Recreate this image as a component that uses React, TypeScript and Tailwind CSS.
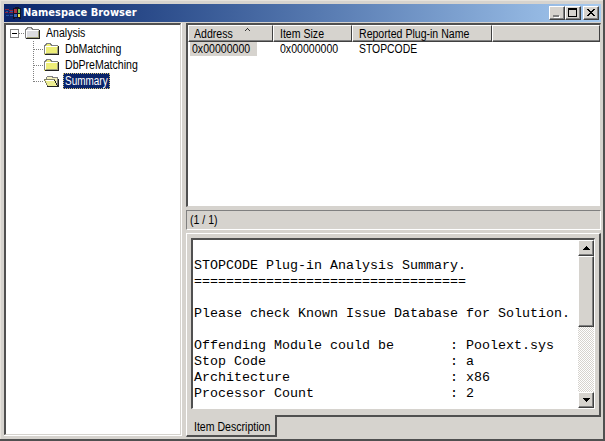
import type { ReactNode } from "react";

const summary = `
STOPCODE Plug-in Analysis Summary.
==================================

Please check Known Issue Database for Solution.

Offending Module could be       : Poolext.sys
Stop Code                       : a
Architecture                    : x86
Processor Count                 : 2`;

function Label({ children, className = "scale-x-[0.88]" }: { children: ReactNode; className?: string }) {
  return <span className={`inline-block origin-left whitespace-pre ${className}`}>{children}</span>;
}

function Folder({ fill }: { fill: string }) {
  return (
    <svg width="16" height="16" viewBox="0 0 16 16" shapeRendering="crispEdges" className="shrink-0">
      <path d="M0 4h1V3h1V2h5v1h1v1h6v10H0z" fill={fill} />
      <path d="M0.500 13V4.500h1v-1h1v-1h4v1h1v1h6" fill="none" stroke="#808080" />
      <path d="M1.500 12V5.500h11" fill="none" stroke="#fff" />
      <path d="M14.500 5v9M1 13.500h14" fill="none" stroke="#222" />
      <path d="M13.500 6v6.500H2" fill="none" stroke="#a3a37c" />
    </svg>
  );
}

function OpenFolder() {
  return (
    <svg width="16" height="16" viewBox="0 0 16 16" shapeRendering="crispEdges" className="shrink-0">
      <path d="M2 5l2-2h4l2 2h4v8H4z" fill="#f5f2bd" />
      <path d="M2.500 6V4.500l1-1h4l2 1h4v8" fill="none" stroke="#808080" />
      <path d="M0 6h11l3 7H4z" fill="#eeee91" />
      <path d="M0 6.500h11M0.500 7l3 6" fill="none" stroke="#808066" />
      <path d="M10.500 7l3 6M3 13.500h11.500V6" fill="none" stroke="#222" />
      <path d="M2 7.500h8" stroke="#fff" />
    </svg>
  );
}

function Raised({ children, className }: { children?: ReactNode; className: string }) {
  return (
    <div className={`box-border border border-t-white border-l-white border-r-[#404040] border-b-[#404040] bg-[#d6d3ce] shadow-[inset_-1px_-1px_0_#808080] ${className}`}>
      {children}
    </div>
  );
}

function TitleBar() {
  return (
    <div className="flex h-[18px] shrink-0 items-center bg-linear-to-r from-[#0a246a] to-[#a6caf0] pr-[2px] pl-px">
      <svg width="16" height="16" viewBox="0 0 16 16" className="shrink-0" shapeRendering="crispEdges">
        <path d="M0 4h4v1h4v1H4V5H0zM0 7h3v1H0zM4 7h4v1H4z" fill="#8d253d" />
        <path d="M1 6h2v1H1zM5 6h3v1H5zM1 10h3v1H1zM5 10h3v1H5z" fill="#2355a0" />
        <path d="M8 3h2V2h4v1h2v11h-2v-1h-4v1H8z" fill="#111326" />
        <path d="M9 4h3v4H9z" fill="#a93242" />
        <path d="M13 4h2v4h-2z" fill="#72c652" />
        <path d="M9 9h3v3H9z" fill="#3565b8" />
        <path d="M13 9h2v3h-2z" fill="#f2e34f" />
      </svg>
      <span className="ml-[2px] inline-block w-[400px] origin-left font-['DejaVu_Sans_Condensed','DejaVu_Sans',sans-serif] text-[11px] leading-[16px] font-bold whitespace-nowrap text-white">
        Namespace Browser
      </span>
      <div className="ml-auto flex">
        <Raised className="h-[14px] w-4">
          <svg width="14" height="12" shapeRendering="crispEdges"><path d="M4 9h6v2H4z" fill="#fff" /><path d="M3 8h6v2H3z" fill="#808080" /></svg>
        </Raised>
        <Raised className="h-[14px] w-4">
          <svg width="14" height="12" shapeRendering="crispEdges"><path d="M2 1h9v9H2zM3 3v6h7V3z" fill="#000" fillRule="evenodd" /></svg>
        </Raised>
        <Raised className="ml-[2px] h-[14px] w-4">
          <svg width="14" height="12" shapeRendering="crispEdges"><path d="M3 2h2v1h1v1h2V3h1V2h2v1h-1v1H9v1H8v1h1v1h1v1h1v1H9V8H8V7H6v1H5v1H3V8h1V7h1V6h1V5H5V4H4V3H3z" fill="#000" /></svg>
        </Raised>
      </div>
    </div>
  );
}

function Tree() {
  return (
    <div className="w-[177px] shrink-0 border-t-2 border-r border-b border-l-2 border-t-[#505050] border-r-[#d6d3ce] border-b-[#d6d3ce] border-l-[#505050] bg-white">
      <div className="flex h-4 items-center pl-1">
        <svg width="15" height="16" shapeRendering="crispEdges">
          <path d="M.5 4.500h8v8h-8z" fill="#fff" stroke="#808080" />
          <path d="M2 8.500h5" stroke="#000" />
          <path d="M9 8.500h6" stroke="#808080" strokeDasharray="1 1" />
        </svg>
        <Folder fill="#dcdce0" />
        <Label className="ml-[5px] scale-x-[0.88]">Analysis</Label>
      </div>
      {["DbMatching", "DbPreMatching", "Summary"].map((name) => (
        <div className="flex h-4 items-center pl-[27px]" key={name}>
          <svg width="11" height="16" shapeRendering="crispEdges">
            <path d={name === "Summary" ? "M.5 0v9" : "M.5 0v16"} stroke="#808080" strokeDasharray="1 1" />
            <path d="M1 8.500h10" stroke="#808080" strokeDasharray="1 1" />
          </svg>
          {name === "Summary" ? <OpenFolder /> : <Folder fill="#eeee78" />}
          {name === "Summary" ? (
            <div className="ml-[3px] h-4 w-[47px] border border-dotted border-[#d6c278] bg-[#0a246a] pl-px leading-[14px] text-white"><Label className="scale-x-[0.83]">{name}</Label></div>
          ) : <Label className="ml-[5px] scale-x-[0.88]">{name}</Label>}
        </div>
      ))}
    </div>
  );
}

function HeaderCell({ children, className }: { children?: ReactNode; className: string }) {
  return (
    <div className={`h-full border-t border-r border-b border-l border-t-white border-r-[#404040] border-b-[#404040] border-l-white leading-[16px] shadow-[inset_0_-1px_0_#808080] ${className}`}>
      {children}
    </div>
  );
}

function ItemList() {
  return (
    <div className="h-[184px] shrink-0 border-t-2 border-r border-b border-l-2 border-t-[#505050] border-r-[#d6d3ce] border-b-[#d6d3ce] border-l-[#505050] bg-white">
      <div className="flex h-[17px] bg-[#d6d3ce]">
        <HeaderCell className="w-[85px] pl-[5px]">
          <div className="flex"><Label>Address</Label>
            <svg className="ml-[5px]" width="7" height="7" shapeRendering="crispEdges"><path d="M1 5h1V4h1V3h1V2h1v1h1v1h1v1H6V4H5V3H4v1H3v1H1z" fill="#333" /></svg>
          </div>
        </HeaderCell>
        <HeaderCell className="w-[79px] pl-[6px]"><Label>Item Size</Label></HeaderCell>
        <HeaderCell className="w-[140px] pl-[6px]"><Label>Reported Plug-in Name</Label></HeaderCell>
        <HeaderCell className="flex-1" />
      </div>
      <div className="flex h-[14px] leading-[14px]">
        <div className="ml-[2px] w-[67px] bg-[#d6d3ce] pl-[2px]"><Label>0x00000000</Label></div>
        <div className="ml-[23px] w-[79px]"><Label>0x00000000</Label></div>
        <Label className="scale-x-[0.865]">STOPCODE</Label>
      </div>
    </div>
  );
}

function ScrollBar() {
  return (
    <div className="flex w-4 shrink-0 flex-col bg-[conic-gradient(#fff_25%,#d6d3ce_0_50%,#fff_0_75%,#d6d3ce_0)] bg-size-[2px_2px]">
      <Raised className="h-4 w-4">
        <svg width="14" height="14" shapeRendering="crispEdges"><path d="M4 9h7V8h-1V7H9V6H8V5H7v1H6v1H5v1H4z" fill="#000" /></svg>
      </Raised>
      <Raised className="h-[71px] w-4" />
      <Raised className="mt-auto h-4 w-4">
        <svg width="14" height="14" shapeRendering="crispEdges"><path d="M4 5h7v1h-1v1H9v1H8v1H7V8H6V7H5V6H4z" fill="#000" /></svg>
      </Raised>
    </div>
  );
}

function Description() {
  return (
    <div className="mt-[3px] flex flex-1 flex-col">
      <div className="h-[184px] shrink-0 border-t border-r-2 border-b-2 border-l border-t-white border-r-[#505050] border-b-[#505050] border-l-white bg-[#d6d3ce] pt-1 pr-[4px] pb-[5px] pl-1">
        <div className="flex h-[171px] border-t-2 border-r border-b border-l-2 border-t-[#505050] border-r-white border-b-white border-l-[#505050] bg-white">
          <pre className="min-w-0 flex-1 overflow-hidden pt-[2px] pl-px font-['Liberation_Mono',monospace] text-[13.333px] leading-[16px]">{summary}</pre>
          <ScrollBar />
        </div>
      </div>
      <div className="-mt-[2px] ml-0 h-[22px] w-[91px] shrink-0 border-r-2 border-b-2 border-l border-r-[#505050] border-b-[#505050] border-l-white bg-[#d6d3ce] pl-[7px] leading-[24px]">
        <Label>Item Description</Label>
      </div>
    </div>
  );
}

export default function App() {
  return (
    <div className="h-[441px] w-[605px] overflow-hidden border-r-2 border-b-2 border-[#505050] bg-[#d6d3ce] font-['Liberation_Sans',sans-serif] text-[12px] text-black">
      <div className="flex h-full flex-col border-t border-l border-[#e7e3dc] pt-[3px] pr-[2px] pl-[3px]">
        <TitleBar />
        <div className="mt-px flex min-h-0 flex-1">
          <div className="flex h-[413px] border-r border-b border-white"><Tree /></div>
          <div className="ml-[4px] flex min-w-0 flex-1 flex-col">
            <ItemList />
            <div className="mt-[3px] h-5 shrink-0 border border-t-[#808080] border-r-white border-b-white border-l-[#808080] pl-[3px] leading-[18px]"><Label>(1 / 1)</Label></div>
            <Description />
          </div>
        </div>
      </div>
    </div>
  );
}
